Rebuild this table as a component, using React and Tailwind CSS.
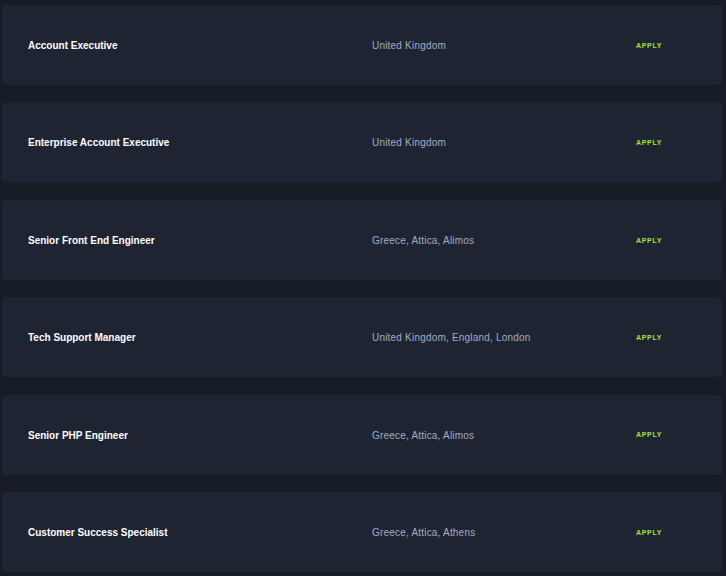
const jobs = [
  { title: "Account Executive", location: "United Kingdom" },
  { title: "Enterprise Account Executive", location: "United Kingdom" },
  { title: "Senior Front End Engineer", location: "Greece, Attica, Alimos" },
  { title: "Tech Support Manager", location: "United Kingdom, England, London" },
  { title: "Senior PHP Engineer", location: "Greece, Attica, Alimos" },
  { title: "Customer Success Specialist", location: "Greece, Attica, Athens" },
];

export default function App() {
  return (
    <div className="min-h-[576px] w-[726px] bg-[#171c27] pt-[5px] pl-[2px] pr-[4px] font-['Liberation_Sans',sans-serif]">
      <ul className="flex flex-col gap-[17.4px]">
        {jobs.map((job) => (
          <li
            key={job.title}
            className="flex h-[80px] items-center rounded-[4px] bg-[#1e2432]"
          >
            <p className="w-[370px] pl-[26px] pt-px text-[10px] font-bold text-white">
              {job.title}
            </p>
            <p className="w-[264px] pt-px text-[10px] tracking-[0.02em] text-[#a3adc2]">{job.location}</p>
            <a className="pt-[2px] text-[7px] font-bold tracking-[0.1em] text-[#a3e635]">APPLY</a>
          </li>
        ))}
      </ul>
    </div>
  );
}
